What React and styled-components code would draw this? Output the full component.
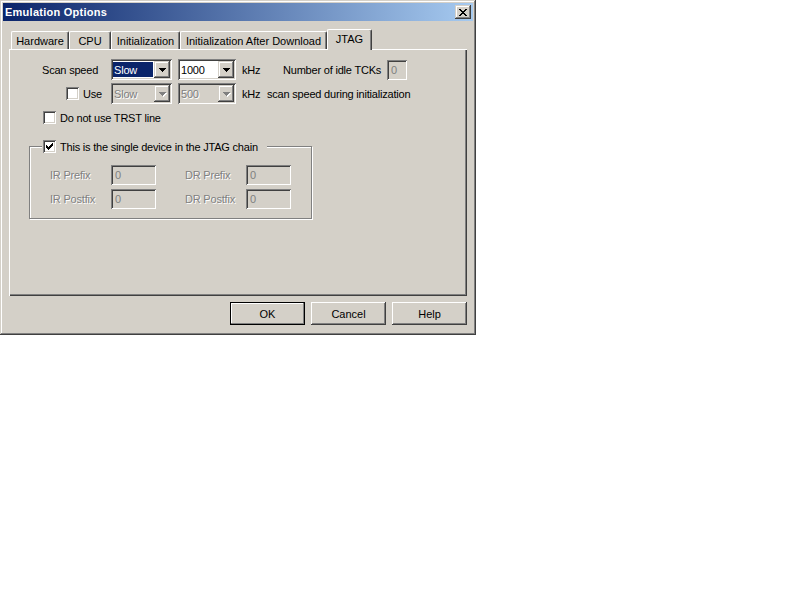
import React from 'react';
import styled, { createGlobalStyle, css } from 'styled-components';

const face = '#d4d0c8';
const shadow = '#808080';
const dark = '#404040';
const navy = '#0a246a';

const Global = createGlobalStyle`
  html, body { margin: 0; padding: 0; background: #fff; }
  body {
    font-family: "Liberation Sans", Arial, sans-serif;
    font-size: 11px;
    color: #000;
  }
`;

const raised = css`
  box-shadow: inset -1px -1px ${dark}, inset 1px 1px ${face}, inset -2px -2px ${shadow}, inset 2px 2px #fff;
`;

const sunken = css`
  box-shadow: inset 1px 1px ${shadow}, inset -1px -1px #fff, inset 2px 2px ${dark}, inset -2px -2px ${face};
`;

const Window = styled.div`
  width: 476px;
  height: 335px;
  box-sizing: border-box;
  padding: 3px;
  background: ${face};
  ${raised};
  display: flex;
  flex-direction: column;
`;

const TitleBar = styled.div`
  height: 18px;
  display: flex;
  align-items: center;
  padding-left: 2px;
  background: linear-gradient(to right, ${navy}, #a6caf0);
  color: #fff;
  font-weight: bold;
  font-size: 11px;
  letter-spacing: 0.25px;
`;

const CloseButton = styled.div`
  margin-left: auto;
  margin-right: 2px;
  width: 16px;
  height: 14px;
  box-sizing: border-box;
  background: ${face};
  ${raised};
  display: flex;
  align-items: center;
  justify-content: center;
  padding-right: 1px;
`;

const Body = styled.div`
  flex: 1;
  display: flex;
  flex-direction: column;
  padding: 8px 6px 0 6px;
`;

const TabStrip = styled.div`
  display: flex;
  align-items: flex-end;
  height: 20px;
  padding-left: 2px;
  position: relative;
  z-index: 1;
`;

const Tab = styled.div`
  box-sizing: border-box;
  width: ${p => p.$w}px;
  height: ${p => (p.$active ? 21 : 18)}px;
  margin-bottom: ${p => (p.$active ? -1 : 0)}px;
  background: ${face};
  border-top: 1px solid #fff;
  border-left: 1px solid #fff;
  border-right: 1px solid ${dark};
  border-radius: 2px 2px 0 0;
  box-shadow: inset -1px 0 ${shadow};
  display: flex;
  align-items: ${p => (p.$active ? 'flex-start' : 'center')};
  padding-top: ${p => (p.$active ? 3 : 0)}px;
  justify-content: center;
  white-space: nowrap;
`;

const Page = styled.div`
  box-sizing: border-box;
  height: 247px;
  padding: 10px 0 0 33px;
  box-shadow: inset 1px 1px #fff, inset -1px -1px ${dark}, inset -2px -2px ${shadow};
  display: flex;
  flex-direction: column;
  align-items: flex-start;
`;

const Row = styled.div`
  display: flex;
  align-items: center;
  height: ${p => p.$h ?? 21}px;
  margin-top: ${p => p.$top ?? 0}px;
  margin-left: ${p => p.$indent ?? 0}px;
`;

const Text = styled.span`
  flex: none;
  width: ${p => (p.$w ? `${p.$w}px` : 'auto')};
  margin-left: ${p => p.$gap ?? 0}px;
  color: ${p => (p.$disabled ? shadow : '#000')};
  text-shadow: ${p => (p.$disabled ? '1px 1px 0 #fff' : 'none')};
  letter-spacing: -0.2px;
  white-space: nowrap;
`;

const ComboBox = styled.div`
  flex: none;
  box-sizing: border-box;
  width: ${p => p.$w}px;
  height: 21px;
  margin-left: ${p => p.$gap ?? 0}px;
  padding: 2px;
  display: flex;
  background: ${p => (p.$disabled ? face : '#fff')};
  ${sunken};
`;

const ComboValue = styled.div`
  flex: 1;
  display: flex;
  align-items: center;
  margin: 1px 1px 1px 0;
  padding-left: 1px;
  background: ${p => (p.$selected ? navy : 'transparent')};
  color: ${p => (p.$selected ? '#fff' : p.$disabled ? shadow : '#000')};
  text-shadow: ${p => (p.$disabled ? '1px 1px 0 #fff' : 'none')};
  letter-spacing: -0.2px;
`;

const DropButton = styled.div`
  flex: none;
  width: 16px;
  height: 17px;
  box-sizing: border-box;
  background: ${face};
  ${raised};
  display: flex;
  align-items: center;
  justify-content: center;
`;

const Arrow = styled.svg`
  display: block;
  filter: ${p => (p.$disabled ? 'drop-shadow(1px 1px 0 #fff)' : 'none')};
`;

const Edit = styled.div`
  flex: none;
  box-sizing: border-box;
  width: ${p => p.$w}px;
  height: 20px;
  padding-left: 4px;
  display: flex;
  align-items: center;
  background: ${face};
  color: ${shadow};
  ${sunken};
`;

const CheckBox = styled.div`
  flex: none;
  box-sizing: border-box;
  width: 13px;
  height: 13px;
  background: #fff;
  ${sunken};
  display: flex;
  align-items: center;
  justify-content: center;
  margin-right: 4px;
`;

const GroupBox = styled.div`
  box-sizing: border-box;
  width: 283px;
  height: 73px;
  margin: 22px 0 0 -13px;
  border: 1px solid ${shadow};
  box-shadow: inset 1px 1px #fff, 1px 1px #fff;
  display: flex;
  flex-direction: column;
  align-items: flex-start;
`;

const GroupCaption = styled.div`
  display: flex;
  align-items: center;
  height: 13px;
  margin: -7px 0 0 12px;
  padding: 0 9px 0 1px;
  background: ${face};
`;

const GroupRows = styled.div`
  display: flex;
  flex-direction: column;
  gap: 4px;
  margin: 12px 0 0 20px;
`;

const ButtonBar = styled.div`
  display: flex;
  justify-content: flex-end;
  gap: 6px;
  margin-top: 6px;
`;

const PushButton = styled.div`
  box-sizing: border-box;
  width: 75px;
  height: 23px;
  display: flex;
  align-items: center;
  justify-content: center;
  background: ${face};
  box-shadow: ${p =>
    p.$default
      ? `inset 0 0 0 1px #000, inset -2px -2px ${shadow}, inset 2px 2px #fff`
      : `inset -1px -1px ${dark}, inset 1px 1px #fff, inset -2px -2px ${shadow}`};
`;

const DownArrow = ({ disabled }) => (
  <Arrow $disabled={disabled} width="7" height="4" viewBox="0 0 7 4" shapeRendering="crispEdges">
    <polygon points="0,0 7,0 3.5,4" fill={disabled ? shadow : '#000'} />
  </Arrow>
);

const Combo = ({ w, value, selected, disabled, gap }) => (
  <ComboBox $w={w} $disabled={disabled} $gap={gap}>
    <ComboValue $selected={selected} $disabled={disabled}>{value}</ComboValue>
    <DropButton>
      <DownArrow disabled={disabled} />
    </DropButton>
  </ComboBox>
);

const Check = ({ checked }) => (
  <CheckBox>
    {checked && (
      <svg width="7" height="7" viewBox="0 0 7 7" shapeRendering="crispEdges">
        <path
          d="M6 0h1v1h-1zM5 1h2v1h-2zM0 2h1v1h-1zM4 2h3v1h-3zM0 3h2v1h-2zM3 3h3v1h-3zM0 4h5v1h-5zM1 5h3v1h-3zM2 6h1v1h-1z"
          fill="#000"
        />
      </svg>
    )}
  </CheckBox>
);

const tabs = [
  { label: 'Hardware', w: 58 },
  { label: 'CPU', w: 42 },
  { label: 'Initialization', w: 69 },
  { label: 'Initialization After Download', w: 147 },
  { label: 'JTAG', w: 45, active: true },
];

export default function App() {
  return (
    <>
      <Global />
      <Window>
        <TitleBar>
          Emulation Options
          <CloseButton>
            <svg width="8" height="7" viewBox="0 0 8 7" shapeRendering="crispEdges">
              <path
                d="M0 0h2v1h-2zM6 0h2v1h-2zM1 1h2v1h-2zM5 1h2v1h-2zM2 2h4v1h-4zM3 3h2v1h-2zM2 4h4v1h-4zM1 5h2v1h-2zM5 5h2v1h-2zM0 6h2v1h-2zM6 6h2v1h-2z"
                fill="#000"
              />
            </svg>
          </CloseButton>
        </TitleBar>
        <Body>
          <TabStrip>
            {tabs.map(t => (
              <Tab key={t.label} $w={t.w} $active={t.active}>{t.label}</Tab>
            ))}
          </TabStrip>
          <Page>
            <Row>
              <Text $w={69}>Scan speed</Text>
              <Combo w={61} value="Slow" selected />
              <Combo w={58} value="1000" gap={6} />
              <Text $w={41} $gap={6}>kHz</Text>
              <Text $w={104}>Number of idle TCKs</Text>
              <Edit $w={20}>0</Edit>
            </Row>
            <Row $top={3} $indent={24}>
              <Check />
              <Text $w={28}>Use</Text>
              <Combo w={61} value="Slow" disabled />
              <Combo w={58} value="500" disabled gap={6} />
              <Text $w={25} $gap={6}>kHz</Text>
              <Text>scan speed during initialization</Text>
            </Row>
            <Row $h={13} $top={7} $indent={1}>
              <Check />
              <Text>Do not use TRST line</Text>
            </Row>
            <GroupBox>
              <GroupCaption>
                <Check checked />
                <Text>This is the single device in the JTAG chain</Text>
              </GroupCaption>
              <GroupRows>
                <Row $h={20}>
                  <Text $w={61} $disabled>IR Prefix</Text>
                  <Edit $w={45}>0</Edit>
                  <Text $w={61} $gap={29} $disabled>DR Prefix</Text>
                  <Edit $w={45}>0</Edit>
                </Row>
                <Row $h={20}>
                  <Text $w={61} $disabled>IR Postfix</Text>
                  <Edit $w={45}>0</Edit>
                  <Text $w={61} $gap={29} $disabled>DR Postfix</Text>
                  <Edit $w={45}>0</Edit>
                </Row>
              </GroupRows>
            </GroupBox>
          </Page>
          <ButtonBar>
            <PushButton $default>OK</PushButton>
            <PushButton>Cancel</PushButton>
            <PushButton>Help</PushButton>
          </ButtonBar>
        </Body>
      </Window>
    </>
  );
}
